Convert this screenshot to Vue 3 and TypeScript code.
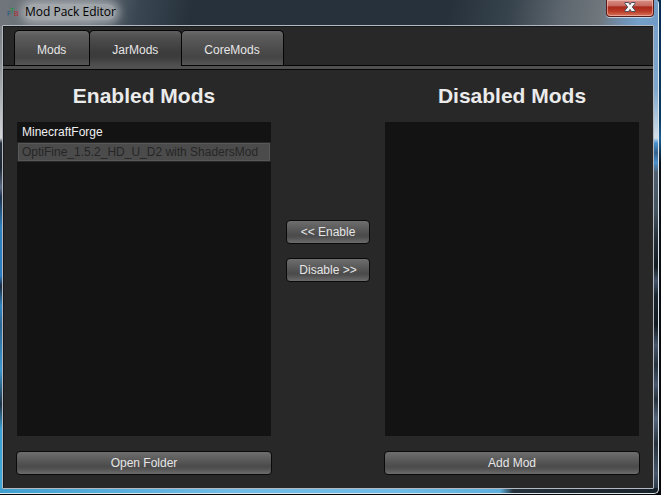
<script setup lang="ts">
import { ref } from 'vue'

interface Mod {
  name: string
}

const tabs: string[] = ['Mods', 'JarMods', 'CoreMods']
const activeTab = ref<string>('JarMods')

const enabledMods = ref<Mod[]>([
  { name: 'MinecraftForge' },
  { name: 'OptiFine_1.5.2_HD_U_D2 with ShadersMod' },
])
const disabledMods = ref<Mod[]>([])
const selected = ref<string>('OptiFine_1.5.2_HD_U_D2 with ShadersMod')

function move(from: Mod[], to: Mod[]): void {
  const index = from.findIndex((mod) => mod.name === selected.value)
  if (index >= 0) to.push(...from.splice(index, 1))
}
</script>

<template>
  <div class="desktop">
    <div class="frame">
      <header class="titlebar">
        <svg class="logo" viewBox="0 0 12 12" aria-hidden="true">
          <text x="0" y="10" fill="#1f5480">F</text>
          <text x="3" y="7" fill="#12a036">T</text>
          <text x="7" y="10" fill="#b3262f">B</text>
        </svg>
        <span class="title">Mod Pack Editor</span>
        <button class="close" type="button" aria-label="Close">
          <svg viewBox="0 0 12 12" aria-hidden="true">
            <path
              d="M1 1.5h3.6L6 3.6l1.4-2.1H11v1.2L8.3 6 11 9.3v1.2H7.4L6 8.4l-1.4 2.1H1V9.3L3.7 6 1 2.7z"
              fill="#f6f6f6"
              stroke="#4b4e5c"
              stroke-width="1"
            />
          </svg>
        </button>
      </header>

      <main class="client">
        <div class="tabs" role="tablist">
          <button
            v-for="tab in tabs"
            :key="tab"
            type="button"
            role="tab"
            class="tab"
            :class="{ active: tab === activeTab }"
            :aria-selected="tab === activeTab"
            @click="activeTab = tab"
          >
            {{ tab }}
          </button>
        </div>
        <div class="band"></div>

        <div class="editor">
          <section class="column">
            <h2 id="enabled-title">Enabled Mods</h2>
            <ul class="list" role="listbox" aria-labelledby="enabled-title">
              <li
                v-for="mod in enabledMods"
                :key="mod.name"
                role="option"
                class="item"
                :class="{ selected: mod.name === selected }"
                :aria-selected="mod.name === selected"
                @click="selected = mod.name"
              >
                {{ mod.name }}
              </li>
            </ul>
            <button class="btn" type="button">Open Folder</button>
          </section>

          <div class="actions">
            <button class="btn" type="button" @click="move(disabledMods, enabledMods)">&lt;&lt; Enable</button>
            <button class="btn" type="button" @click="move(enabledMods, disabledMods)">Disable &gt;&gt;</button>
          </div>

          <section class="column">
            <h2 id="disabled-title">Disabled Mods</h2>
            <ul class="list" role="listbox" aria-labelledby="disabled-title">
              <li
                v-for="mod in disabledMods"
                :key="mod.name"
                role="option"
                class="item"
                :class="{ selected: mod.name === selected }"
                :aria-selected="mod.name === selected"
                @click="selected = mod.name"
              >
                {{ mod.name }}
              </li>
            </ul>
            <button class="btn" type="button">Add Mod</button>
          </section>
        </div>
      </main>
    </div>
  </div>
</template>

<style>
body {
  background: #fff;
}
</style>

<style scoped>
.desktop {
  box-sizing: border-box;
  display: flex;
  min-height: calc(100vh - 5px);
  margin: 0 10px 5px 0;
  padding: 0 2px 1px 0;
  background: linear-gradient(#062c50 0, #0a3a62 24%, #1b5f96 28%, #0a1018 33%, #05070a 100%);
  font-family: "Liberation Sans", Arial, sans-serif;
  font-size: 12px;
}

.frame {
  box-sizing: border-box;
  flex: 1;
  display: flex;
  flex-direction: column;
  padding: 0 4px 4px 2px;
  border: solid #dfe6ea;
  border-width: 0 1px 1px 0;
  border-radius: 0 4px 5px 0;
  background:
    linear-gradient(100deg, #6f757b 0, #666e76 14%, #3a4752 21%, #26313b 29%, #26313b 68%, #36424c 77%, #5d666e 85%, #70777d 91%, #6f94b8 95%, #749fc8 97%, #6f9bc6 100%) top / 100% 26px no-repeat,
    linear-gradient(90deg, #3fa0d0 0, #70bce6 35%, #6fbce8 60%, #5eb0dc 76%, #25313b 78%, #18222a 100%) bottom / 100% 5px no-repeat,
    linear-gradient(#6f757b 0, #8a8f93 12%, #d4d6d8 28%, #26313b 29%, #1d2833 34%, #5a6b85 38%, #1d3350 40%, #2f80bd 46%, #2b7cc0 56%, #1b2c40 58%, #3186c2 62%, #2c6694 66%, #3b97cf 75%, #203447 82%, #3a9fd2 87%, #41a7d8 100%) left / 2px 100% no-repeat,
    linear-gradient(#749fc8 0, #7ca6cc 18%, #d2dfea 28%, #4b93d2 29%, #35618b 31%, #4a90cc 33%, #4f5f6f 35%, #45525f 43%, #26313b 48%, #131b21 54%, #45546a 57%, #1a252d 60%, #131b21 66%, #46566c 70%, #26313b 74%, #46566c 78%, #26313b 81%, #55657c 85%, #26313b 90%, #46566c 96%, #26313b 100%) right / 4px 100% no-repeat;
}

.titlebar {
  display: flex;
  align-items: flex-start;
  height: 25px;
}

.logo {
  z-index: 1;
  width: 12px;
  height: 12px;
  margin: 6px 0 0 5px;
  overflow: visible;
  font-size: 7px;
}

.title {
  margin: 4px auto 0 6px;
  border-radius: 8px;
  background: rgba(200, 203, 206, 0.6);
  box-shadow: 0 0 8px 4px rgba(200, 203, 206, 0.6);
  color: #000;
  font-family: "Open Sans", "Noto Sans", sans-serif;
  font-size: 12px;
  line-height: 16px;
}

.close {
  box-sizing: border-box;
  display: flex;
  align-items: center;
  justify-content: center;
  width: 48px;
  height: 17px;
  padding: 0 0 2px;
  border: 1px solid #571c1c;
  border-top: 0;
  border-radius: 0 0 4px 4px;
  background: linear-gradient(#d78f87 0, #c5665c 38%, #a8281b 42%, #b93a25 70%, #d7745c 100%);
  box-shadow: inset 0 0 0 1px rgba(255, 205, 195, 0.55), 0 1px 0 rgba(230, 240, 250, 0.7);
}

.close svg {
  width: 12px;
  height: 12px;
}

.client {
  flex: 1;
  display: flex;
  flex-direction: column;
  padding-top: 4px;
  border: 1px solid #b3b8c0;
  border-radius: 1px;
  background: #282828;
  box-shadow: inset 1px 1px 0 #17191c;
}

.tabs {
  display: flex;
  padding-left: 11px;
}

.tab {
  box-sizing: border-box;
  height: 35px;
  margin-right: -1px;
  padding: 4px 23px 0 22px;
  border: 1px solid #050505;
  border-bottom: 0;
  border-radius: 5px 5px 0 0;
  background: linear-gradient(#6a6a6a 0, #5c5c5c 15%, #4a4a4a 60%, #454545 78%, #565656 100%);
  color: #e6e6e6;
  font: inherit;
}

.tab.active {
  position: relative;
  height: 36px;
  margin-bottom: -1px;
  padding-bottom: 1px;
  background: linear-gradient(#5e5e5e 0, #4d4d4d 20%, #3c3c3c 60%, #3c3c3c 75%, #505050 100%);
}

.band {
  height: 3px;
  border: solid #050505;
  border-width: 1px 0;
  background: #505050;
}

.editor {
  flex: 1;
  display: grid;
  grid-template-columns: 1fr 84px 1fr;
  gap: 14px;
  padding: 12px 13px 13px;
}

.column {
  display: flex;
  flex-direction: column;
  min-width: 0;
}

h2 {
  margin: 0 0 12px;
  color: #ebebeb;
  font-size: 21px;
  line-height: 28px;
  text-align: center;
}

.list {
  flex: 1;
  margin: 0 1px 15px;
  padding: 0;
  background: #131313;
  list-style: none;
}

.item {
  box-sizing: border-box;
  height: 20px;
  padding: 0 4px;
  border: 1px solid transparent;
  color: #f0f0f0;
  line-height: 19px;
  white-space: nowrap;
}

.item.selected {
  border-color: #282828;
  background: #4b4b4b;
  box-shadow: inset 0 0 0 1px #585858;
  color: #262626;
}

.btn {
  box-sizing: border-box;
  width: 100%;
  height: 24px;
  padding: 0;
  border: 1px solid #0a0a0a;
  border-radius: 4px;
  background: linear-gradient(#6e6e6e 0, #606060 25%, #4b4b4b 65%, #505050 75%, #6c6c6c 100%);
  color: #e6e6e6;
  font: inherit;
}

.actions {
  display: flex;
  flex-direction: column;
  gap: 14px;
  padding-top: 138px;
}
</style>
